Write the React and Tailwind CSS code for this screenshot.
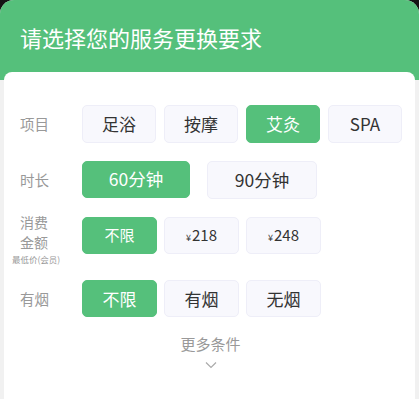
import React, { useState } from 'react';

const FONT = { fontFamily: '"Noto Sans CJK SC", "Noto Sans", sans-serif' };

function Option({ selected, className = '', children, onClick }) {
  return (
    <button
      onClick={onClick}
      className={`flex items-center justify-center rounded-[5px] border ${
        selected
          ? 'bg-[#55c07b] border-[#55c07b] text-white'
          : 'bg-[#f8f8fd] border-[#eeeef8] text-[#333]'
      } ${className}`}
    >
      {children}
    </button>
  );
}

function Label({ children }) {
  return (
    <div className="w-[78px] shrink-0 pl-[16px] text-[14.5px] text-[#999]">{children}</div>
  );
}

export default function App() {
  const [item, setItem] = useState('艾灸');
  const [duration, setDuration] = useState('60分钟');
  const [price, setPrice] = useState('不限');
  const [smoke, setSmoke] = useState('不限');

  return (
    <div className="w-[419px] h-[399px] bg-[#141414] overflow-hidden" style={FONT}>
      <div className="h-full rounded-t-[14px] overflow-hidden bg-[#f1f1f1] flex flex-col">
        <div className="h-[80px] shrink-0 bg-[#55c07b] pt-[21px] pl-[20px]">
          <h1 className="text-[22px] leading-[32px] text-white">请选择您的服务更换要求</h1>
        </div>

        <div className="flex-1 mx-[4px] -mt-[8px] bg-white rounded-t-[8px] pt-[33px]">
          {/* 项目 */}
          <div className="flex items-center">
            <Label>项目</Label>
            <div className="flex gap-[8px]">
              {['足浴', '按摩', '艾灸', 'SPA'].map((t) => (
                <Option
                  key={t}
                  selected={item === t}
                  onClick={() => setItem(t)}
                  className="w-[74px] h-[38px] text-[17px]"
                >
                  {t}
                </Option>
              ))}
            </div>
          </div>

          {/* 时长 */}
          <div className="flex items-center mt-[18px]">
            <Label>时长</Label>
            <div className="flex gap-[17px]">
              <Option
                selected={duration === '60分钟'}
                onClick={() => setDuration('60分钟')}
                className="w-[108px] h-[37px] text-[17.5px]"
              >
                60分钟
              </Option>
              <Option
                selected={duration === '90分钟'}
                onClick={() => setDuration('90分钟')}
                className="w-[110px] h-[38px] text-[17.5px]"
              >
                90分钟
              </Option>
            </div>
          </div>

          {/* 消费金额 */}
          <div className="flex items-start mt-[13px]">
            <div className="w-[78px] shrink-0 pl-[16px] text-[#999]">
              <div className="text-[14px] leading-[20px]">
                消费
                <br />
                金额
              </div>
              <div className="-ml-[8px] mt-[1px] text-[8.5px] leading-[12px] whitespace-nowrap">
                最低价(会员)
              </div>
            </div>
            <div className="flex gap-[7px] mt-[5px]">
              {['不限', '218', '248'].map((t) => (
                <Option
                  key={t}
                  selected={price === t}
                  onClick={() => setPrice(t)}
                  className="w-[75px] h-[37px] text-[15px]"
                >
                  {t === '不限' ? (
                    t
                  ) : (
                    <span className="flex items-baseline">
                      <span className="text-[9px] mr-[1px]">¥</span>
                      {t}
                    </span>
                  )}
                </Option>
              ))}
            </div>
          </div>

          {/* 有烟 */}
          <div className="flex items-center mt-[15px]">
            <Label>有烟</Label>
            <div className="flex gap-[7px]">
              {['不限', '有烟', '无烟'].map((t) => (
                <Option
                  key={t}
                  selected={smoke === t}
                  onClick={() => setSmoke(t)}
                  className="w-[75px] h-[37px] text-[17px]"
                >
                  {t}
                </Option>
              ))}
            </div>
          </div>

          {/* 更多条件 */}
          <div className="flex flex-col items-center mt-[17px] pl-[2px]">
            <div className="text-[15px] leading-[20px] text-[#999]">更多条件</div>
            <svg width="12" height="8" viewBox="0 0 12 8" className="mt-[7px]">
              <path d="M1 1.5 L6 6.5 L11 1.5" fill="none" stroke="#aaa" strokeWidth="1.2" />
            </svg>
          </div>
        </div>
      </div>
    </div>
  );
}
